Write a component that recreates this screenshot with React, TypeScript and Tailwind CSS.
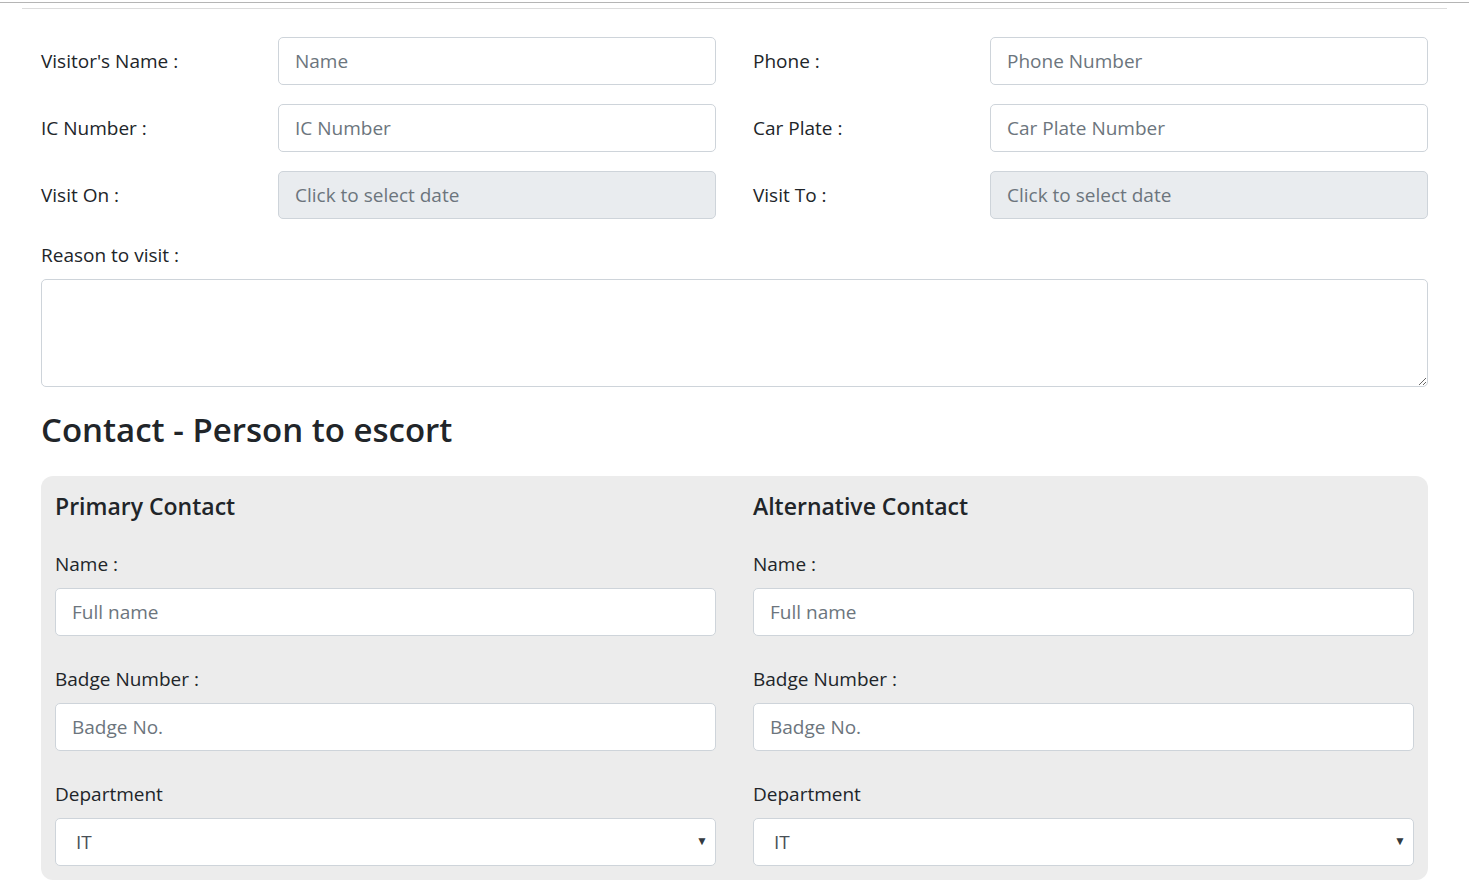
import React from "react";

const font = { fontFamily: '"Open Sans", "Noto Sans", sans-serif' };

const inputCls =
  "h-[48px] w-full rounded-[5px] border border-[#ced4da] bg-white px-4 text-[19px] text-[#495057] placeholder:text-[#6c757d] outline-none";
const dateCls =
  "h-[48px] w-full rounded-[5px] border border-[#ced4da] bg-[#e9ecef] px-4 text-[19px] text-[#495057] placeholder:text-[#6c757d] outline-none";

function Field({ label, placeholder, date }: { label: string; placeholder: string; date?: boolean }) {
  return (
    <div className="flex flex-1 items-center">
      <label className="w-[237px] shrink-0 text-[19px] text-[#212529]">{label}</label>
      <input readOnly={date} placeholder={placeholder} className={date ? dateCls : inputCls} />
    </div>
  );
}

function ContactColumn({ title }: { title: string }) {
  return (
    <div className="flex flex-1 flex-col">
      <h4 className="text-[23px] font-semibold leading-[29px] text-[#212529]">{title}</h4>
      <label className="mt-[28px] text-[19px] leading-[30px] text-[#212529]">Name :</label>
      <input placeholder="Full name" className={"mt-[9px] " + inputCls} />
      <label className="mt-[28px] text-[19px] leading-[30px] text-[#212529]">Badge Number :</label>
      <input placeholder="Badge No." className={"mt-[9px] " + inputCls} />
      <label className="mt-[28px] text-[19px] leading-[30px] text-[#212529]">Department</label>
      <div className="relative mt-[9px]">
        <select className="h-[48px] w-full appearance-none rounded-[5px] border border-[#ced4da] bg-white pl-[20px] text-[19px] text-[#495057] outline-none">
          <option>IT</option>
          <option>HR</option>
          <option>Finance</option>
        </select>
        <span className="pointer-events-none absolute right-[8px] top-[14px] text-[12px] text-[#343a40]">▼</span>
      </div>
    </div>
  );
}

export default function App() {
  return (
    <div className="min-h-screen bg-white pb-4" style={font}>
      <div className="h-[2px]" />
      <div className="border-t border-[#b5b5b5]" />
      <hr className="mx-[22px] mt-[5px] border-t border-[#dcdcdc]" />

      <form className="px-[41px] pt-[28px]">
        <div className="flex flex-col gap-[19px]">
          <div className="flex gap-[37px]">
            <Field label="Visitor's Name :" placeholder="Name" />
            <Field label="Phone :" placeholder="Phone Number" />
          </div>
          <div className="flex gap-[37px]">
            <Field label="IC Number :" placeholder="IC Number" />
            <Field label="Car Plate :" placeholder="Car Plate Number" />
          </div>
          <div className="flex gap-[37px]">
            <Field label="Visit On :" placeholder="Click to select date" date />
            <Field label="Visit To :" placeholder="Click to select date" date />
          </div>
        </div>

        <label className="mt-[21px] block text-[19px] leading-[30px] text-[#212529]">Reason to visit :</label>
        <textarea className="mt-[9px] block h-[108px] w-full rounded-[5px] border border-[#ced4da] bg-white px-4 py-2 text-[19px] outline-none" />

        <h2 className="mt-[21px] text-[33px] font-semibold leading-[43px] text-[#212529]">Contact - Person to escort</h2>

        <div className="mt-[25px] flex gap-[37px] rounded-[12px] bg-[#ececec] px-[14px] pb-[14px] pt-[16px]">
          <ContactColumn title="Primary Contact" />
          <ContactColumn title="Alternative Contact" />
        </div>
      </form>
    </div>
  );
}
